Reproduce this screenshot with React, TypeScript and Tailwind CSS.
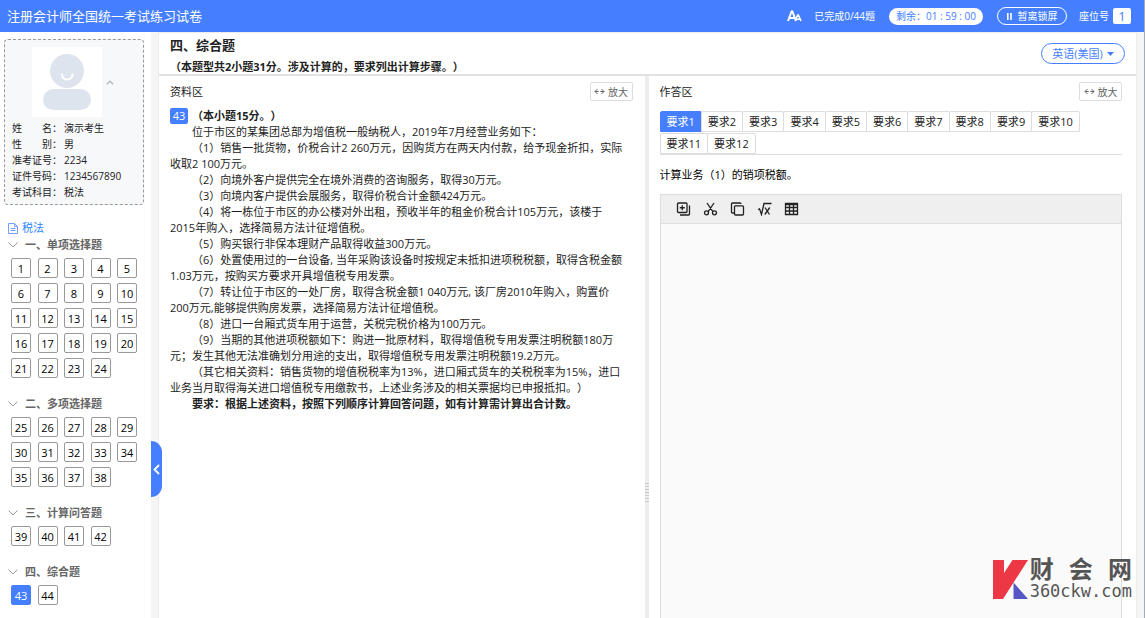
import { useState } from "react";
import type { ReactNode } from "react";

const profile = [
    { label: ["姓", "名："], value: "演示考生" },
    { label: ["性", "别："], value: "男" },
    { label: ["准考证号："], value: "2234" },
    { label: ["证件号码："], value: "1234567890" },
    { label: ["考试科目："], value: "税法" },
];

const sections = [
    { title: "一、单项选择题", from: 1, to: 24 },
    { title: "二、多项选择题", from: 25, to: 38 },
    { title: "三、计算问答题", from: 39, to: 42 },
    { title: "四、综合题", from: 43, to: 44 },
];

const paragraphs = [
    "位于市区的某集团总部为增值税一般纳税人，2019年7月经营业务如下：",
    "（1）销售一批货物，价税合计2 260万元，因购货方在两天内付款，给予现金折扣，实际收取2 100万元。",
    "（2）向境外客户提供完全在境外消费的咨询服务，取得30万元。",
    "（3）向境内客户提供会展服务，取得价税合计金额424万元。",
    "（4）将一栋位于市区的办公楼对外出租，预收半年的租金价税合计105万元，该楼于2015年购入，选择简易方法计征增值税。",
    "（5）购买银行非保本理财产品取得收益300万元。",
    "（6）处置使用过的一台设备, 当年采购该设备时按规定未抵扣进项税税额，取得含税金额1.03万元，按购买方要求开具增值税专用发票。",
    "（7）转让位于市区的一处厂房，取得含税金额1 040万元, 该厂房2010年购入，购置价200万元,能够提供购房发票，选择简易方法计征增值税。",
    "（8）进口一台厢式货车用于运营，关税完税价格为100万元。",
    "（9）当期的其他进项税额如下：购进一批原材料，取得增值税专用发票注明税额180万元；发生其他无法准确划分用途的支出，取得增值税专用发票注明税额19.2万元。",
    "（其它相关资料：销售货物的增值税税率为13%，进口厢式货车的关税税率为15%，进口业务当月取得海关进口增值税专用缴款书，上述业务涉及的相关票据均已申报抵扣。）",
];

const tabs = Array.from({ length: 12 }, (_, i) => i + 1);

function Header() {
    return (
        <header className="flex h-8 shrink-0 items-center bg-[#457fff] pr-[13px] pl-[7px] text-[10px] text-white">
            <h1 className="flex-1 text-[13px]">注册会计师全国统一考试练习试卷</h1>

            <button type="button" aria-label="字号" className="mr-3">
                <svg width="15" height="12" viewBox="0 0 15 12" fill="none" stroke="currentColor" className="block">
                    <path d="M1 11 4.6 1.5h.8L9 11M2.4 8h5" strokeWidth="2" />
                    <path d="m8.2 11 2.4-6h.8l2.6 6M9.2 9.3h3.6" strokeWidth="1.6" />
                </svg>
            </button>
            <span className="mr-3.5">已完成0/44题</span>
            <span className="mr-3.5 flex h-[17px] w-[94px] items-center justify-center rounded-full bg-white text-[#457fff]">
                剩余：01 : 59 : 00
            </span>
            <button
                type="button"
                className="mr-3 flex h-[18px] w-[70px] items-center justify-center gap-1.5 rounded-full border border-white"
            >
                <svg width="5" height="7" viewBox="0 0 5 7" fill="currentColor">
                    <path d="M0 0h1.6v7H0zM3.2 0h1.6v7H3.2z" />
                </svg>
                暂离锁屏
            </button>
            <span>座位号</span>
            <span className="ml-1 flex h-4 w-[18px] items-center justify-center rounded-xs bg-white text-[13px] text-[#457fff]">
                1
            </span>
        </header>
    );
}

function ProfileCard() {
    return (
        <div className="mx-1 mt-[7px] mr-[7px] rounded border border-dashed border-[#999] bg-[#f7f8fa] px-[7px] pt-[7px] pb-1 text-[10px] leading-4">
            <div className="mb-[3px] flex items-center pl-5">
                <svg width="70" height="70" viewBox="0 0 70 70" className="shrink-0 bg-white">
                    <circle cx="35" cy="24" r="17" fill="#dde4ee" />
                    <path d="M30 27.5c.5 6.500 10 6.500 10.500 0" fill="none" stroke="#fff" strokeWidth="2" strokeLinecap="round" />
                    <rect x="11" y="42" width="48" height="21" rx="10.500" fill="#dde4ee" />
                </svg>
                <button type="button" aria-label="收起考生信息" className="ml-1 text-[#b3b8c2]">
                    <svg width="8" height="5" viewBox="0 0 8 5" fill="none" stroke="currentColor" strokeWidth="1.300">
                        <path d="m.8 4.200 3.200-3 3.200 3" />
                    </svg>
                </button>
            </div>
            <dl>
                {profile.map((row) => (
                    <div key={row.value} className="flex">
                        <dt className="flex w-[50px] shrink-0 justify-between">
                            {row.label.map((part) => (
                                <span key={part}>{part}</span>
                            ))}
                        </dt>
                        <dd className="ml-0.5">{row.value}</dd>
                    </div>
                ))}
            </dl>
        </div>
    );
}

interface QuestionNavProps {
    current: number;
    onSelect: (n: number) => void;
}

function QuestionNav({ current, onSelect }: QuestionNavProps) {
    return (
        <nav className="mt-[15px] pr-3.5 pl-[11px] text-[11px]">
            <a href="#subject" className="-ml-1 flex h-4 items-center gap-[3px] text-[#2b85ff]">
                <svg width="12" height="13" viewBox="0 0 12 13" fill="none" stroke="#759cff">
                    <path d="M1.500 1.500h6l3 3v7h-9zM7.500 1.500v3h3M3.500 6.500h5M3.500 8.500h5" />
                </svg>
                税法
            </a>
            <div className="mt-px flex flex-col gap-[18px]">
                {sections.map((section) => (
                    <section key={section.title}>
                        <h2 className="mb-[5px] -ml-[3px] flex h-4 items-center gap-[7px] font-bold text-[#666]">
                            <svg width="10" height="6" viewBox="0 0 10 6" fill="none" stroke="#999">
                                <path d="M.5.500 5 5 9.500.500" />
                            </svg>
                            {section.title}
                        </h2>
                        <div className="grid grid-cols-[repeat(5,20px)] justify-between gap-y-[5px]">
                            {Array.from({ length: section.to - section.from + 1 }, (_, i) => section.from + i).map((n) => (
                                <button
                                    key={n}
                                    type="button"
                                    onClick={() => onSelect(n)}
                                    className={
                                        n === current
                                            ? "h-5 rounded-xs border border-[#457fff] bg-[#457fff] leading-none text-white"
                                            : "h-5 rounded-xs border border-[#999] bg-white leading-none text-black"
                                    }
                                >
                                    {n}
                                </button>
                            ))}
                        </div>
                    </section>
                ))}
            </div>
        </nav>
    );
}

function PaneHeader({ children }: { children: ReactNode }) {
    return (
        <div className="flex h-[19px] items-center justify-between">
            <h3>{children}</h3>
            <button
                type="button"
                className="flex h-[19px] w-[43px] items-center justify-center gap-[3px] rounded-xs border border-[#ddd] text-[10px] text-[#666]"
            >
                <svg width="11" height="7" viewBox="0 0 11 7" fill="none" stroke="currentColor">
                    <path d="M3.500 1 1 3.500 3.500 6M1 3.500h3.700M7.500 1 10 3.500 7.500 6M10 3.500H6.300" />
                </svg>
                放大
            </button>
        </div>
    );
}

//editor toolbar drawings, all on a 14px grid
const tools = [
    { name: "复制", path: "M2 1h7.500a1 1 0 0 1 1 1v7.500a1 1 0 0 1-1 1H2a1 1 0 0 1-1-1V2a1 1 0 0 1 1-1M3.500 13H12a1 1 0 0 0 1-1V3.500M5.750 3.300v5M3.250 5.750h5" },
    { name: "剪切", path: "M3.500 1 9.200 9.300M10.500 1 4.800 9.300M5 10.800a2 2 0 1 1-4 0 2 2 0 0 1 4 0M13 10.800a2 2 0 1 1-4 0 2 2 0 0 1 4 0" },
    { name: "粘贴", path: "M3.500 11H2a1 1 0 0 1-1-1V2a1 1 0 0 1 1-1h7.500a1 1 0 0 1 1 1M5 3.800h7a1 1 0 0 1 1 1V12a1 1 0 0 1-1 1H5a1 1 0 0 1-1-1V4.800a1 1 0 0 1 1-1" },
    { name: "公式", path: "M.5 7.500 2 6.800 4 12.500 6.500 1.500H14M7.500 5.500l4.500 7M12.300 5.500l-5 7" },
    { name: "表格", path: "M1 1.500h12v11H1zM1 2.500h12M1 5.500h12M1 9h12M5 2v10.500M9 2v10.500" },
];

function Editor() {
    return (
        <div className="mt-[11px] flex flex-1 flex-col border border-b-0 border-[#ddd]">
            <div className="flex h-[29px] shrink-0 items-center gap-3 border-b border-[#ddd] bg-[#efefef] pl-[15px] text-[#222]">
                {tools.map((tool) => (
                    <button key={tool.name} type="button" aria-label={tool.name}>
                        <svg width="15" height="14" viewBox="0 0 14 14" fill="none" stroke="currentColor" strokeWidth="1.300" className="block">
                            <path d={tool.path} />
                        </svg>
                    </button>
                ))}
            </div>
            <textarea aria-label="作答" className="w-full flex-1 resize-none bg-[#fafafa] p-2 outline-none" />
        </div>
    );
}

function Watermark() {
    return (
        <div className="pointer-events-none absolute right-3 bottom-[18px] flex items-center gap-0.5 text-[#555]">
            <svg width="35" height="39" viewBox="0 0 35 39">
                <path d="M0 0h11v13L19.500 0H35L10 39H0z" fill="#ec3744" />
                <path d="M20.500 22.500 35 39H20.500z" fill="#5558c4" />
            </svg>
            <div>
                <div className="flex justify-between font-['Liberation_Serif','Noto_Sans_CJK_SC',serif] text-2xl leading-6 font-bold">
                    <span>财</span>
                    <span>会</span>
                    <span>网</span>
                </div>
                <div className="font-['DejaVu_Sans_Mono',monospace] text-[17px] leading-[18px]">360ckw.com</div>
            </div>
        </div>
    );
}

export default function App() {
    const [question, setQuestion] = useState(43);
    const [tab, setTab] = useState(1);

    return (
        <div className="relative flex h-screen flex-col overflow-hidden border-r border-[#a5abb5] bg-white font-['Open_Sans','Noto_Sans_CJK_SC',sans-serif] text-[11px] leading-4 text-[#222] [text-spacing-trim:space-all]">
            <Header />

            <div className="flex min-h-0 flex-1 bg-[#f5f5f5] pr-[7px]">
                <aside className="relative mr-[7px] w-[151px] shrink-0 bg-white">
                    <ProfileCard />
                    <QuestionNav current={question} onSelect={setQuestion} />
                    <button
                        type="button"
                        aria-label="收起题目列表"
                        className="absolute bottom-[121px] left-full flex h-14 w-[11px] items-center justify-center rounded-r-full bg-[#457fff] text-white"
                    >
                        <svg width="7" height="11" viewBox="0 0 7 11" fill="none" stroke="currentColor" strokeWidth="1.800">
                            <path d="M6 1 1.500 5.500 6 10" />
                        </svg>
                    </button>
                </aside>

                <main className="flex min-w-0 flex-1 flex-col border-x border-t border-[#ececec] bg-white">
                    <div className="flex h-[43px] shrink-0 items-center justify-between border-b-2 border-[#e2e2e2] pr-[11px] pl-[11px]">
                        <div className="pt-0.5">
                            <h2 className="mb-1 text-[13px] leading-5 font-bold">四、综合题</h2>
                            <p className="font-bold">（本题型共2小题31分。涉及计算的，要求列出计算步骤。）</p>
                        </div>
                        <button
                            type="button"
                            className="flex h-[21px] w-[84px] items-center justify-center gap-1 rounded-full border border-[#457fff] text-[#457fff]"
                        >
                            英语(美国)
                            <svg width="7" height="4" viewBox="0 0 7 4" fill="currentColor">
                                <path d="M0 0h7L3.500 4z" />
                            </svg>
                        </button>
                    </div>

                    <div className="flex min-h-0 flex-1">
                        <section className="min-w-0 flex-1 pt-[6px] pr-3 pl-[11px]">
                            <PaneHeader>资料区</PaneHeader>
                            <div className="mt-[7px] flex items-center font-bold">
                                <span className="mr-1 flex h-4 w-[18px] items-center justify-center rounded-xs bg-[#457fff] font-normal text-white">
                                    43
                                </span>
                                （本小题15分。）
                            </div>
                            <div className="pr-2">
                                {paragraphs.map((text) => (
                                    <p key={text} className="indent-[22px]">
                                        {text}
                                    </p>
                                ))}
                                <p className="indent-[22px] font-bold">
                                    要求：根据上述资料，按照下列顺序计算回答问题，如有计算需计算出合计数。
                                </p>
                            </div>
                        </section>

                        <div className="flex w-1 shrink-0 flex-col justify-center bg-[#ededed] pt-[290px]">
                            <div className="flex flex-col gap-0.5">
                                {[1, 2, 3, 4, 5, 6, 7].map((n) => (
                                    <span key={n} className="h-px bg-[#c8c8c8]" />
                                ))}
                            </div>
                        </div>

                        <section className="flex min-w-0 flex-1 flex-col pt-[6px] pr-3.5 pl-[11px]">
                            <PaneHeader>作答区</PaneHeader>
                            <div role="tablist" className="mt-[10px] flex flex-wrap gap-y-px border-b border-[#ddd] pl-px">
                                {tabs.map((n) => (
                                    <button
                                        key={n}
                                        type="button"
                                        role="tab"
                                        aria-selected={n === tab}
                                        onClick={() => setTab(n)}
                                        className={
                                            n === tab
                                                ? "-ml-px h-[21px] rounded-t-xs border border-[#457fff] bg-[#457fff] px-[6px] text-white"
                                                : "-ml-px h-[21px] rounded-t-xs border border-[#ddd] px-[6px]"
                                        }
                                    >
                                        要求{n}
                                    </button>
                                ))}
                            </div>
                            <p className="mt-3 text-black">计算业务（1）的销项税额。</p>
                            <Editor />
                        </section>
                    </div>
                </main>
            </div>
            <Watermark />
        </div>
    );
}
